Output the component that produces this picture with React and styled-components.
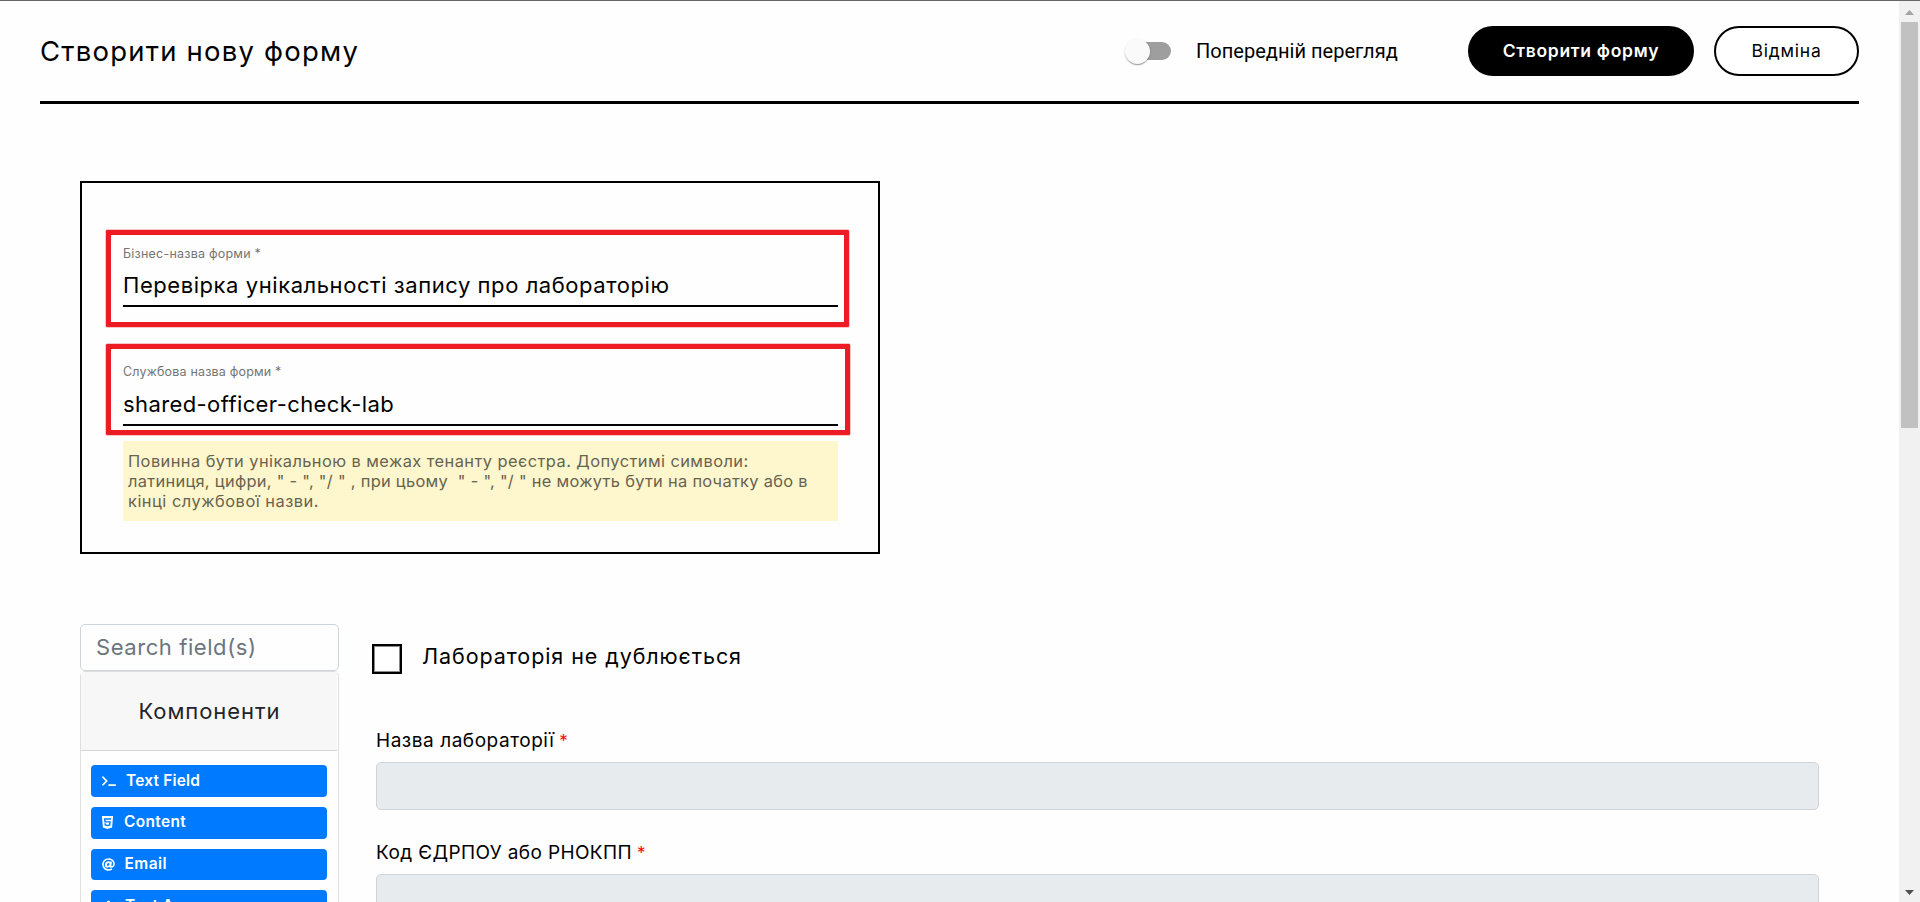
import React from "react";
import styled, { createGlobalStyle } from "styled-components";
import { FaTerminal, FaHtml5, FaAt, FaFont } from "react-icons/fa";

const Global = createGlobalStyle`
  * { box-sizing: border-box; }
  body { margin: 0; background: #fefefe; color: #000; font-family: Inter, "Noto Sans", sans-serif; }
`;
const Page = styled.div`
  display: grid;
  grid-template-columns: 1fr 21px;
  height: 902px;
  overflow: hidden;
  border-top: 1px solid #666;
`;
const Main = styled.main`
  min-width: 0;
  overflow: hidden;
`;
const Text = styled.span`
  display: block;
  font-size: ${(p) => p.$size}px;
  font-weight: ${(p) => p.$weight || 400};
  letter-spacing: ${(p) => p.$track || 0}px;
  white-space: pre;
`;
const Header = styled.header`
  display: flex;
  align-items: center;
  height: 103px;
  margin: 0 40px;
  border-bottom: 3px solid #000;
`;
const Title = styled.h1`
  margin: 0 auto 0 0;
  line-height: 36px;
`;
const Toggle = styled.div`
  display: flex;
  align-items: center;
  width: 42px;
  height: 18px;
  margin-right: 25px;
  border-radius: 9px;
  background: #9e9e9e;
`;
const Thumb = styled.span`
  width: 25px;
  height: 25px;
  margin-left: -4px;
  flex: none;
  border-radius: 50%;
  background: #fafafa;
  box-shadow: 0 2px 1px -1px rgba(0, 0, 0, 0.2), 0 1px 1px rgba(0, 0, 0, 0.14), 0 1px 3px rgba(0, 0, 0, 0.12);
`;
const ToggleLabel = styled.label`
  width: 272px;
  font-family: Roboto, sans-serif;
`;
const Button = styled.button`
  width: ${(p) => p.$w}px;
  height: 50px;
  padding: 0 0 2px;
  border: 2px solid #000;
  border-radius: 25px;
  background: ${(p) => (p.$primary ? "#000" : "#fff")};
  color: ${(p) => (p.$primary ? "#fff" : "#000")};
  font-family: inherit;
  margin-left: ${(p) => (p.$primary ? 0 : 20)}px;
`;
const Card = styled.section`
  width: 800px;
  height: 373px;
  margin: 77px 0 70px 80px;
  padding: 61px 40px 0 41px;
  border: 2px solid #000;
`;
const Field = styled.div`
  position: relative;
  margin-bottom: ${(p) => p.$gap}px;
  border-bottom: 2px solid #000;
`;
const FieldLabel = styled.div`
  height: 20px;
  line-height: 20px;
  color: #757575;
`;
const FieldValue = styled.div`
  height: 35px;
  margin-top: ${(p) => p.$top}px;
  line-height: 30px;
`;
const Highlight = styled.span`
  position: absolute;
  left: -17px;
  top: ${(p) => p.$top}px;
  width: ${(p) => p.$w}px;
  height: ${(p) => p.$h}px;
  border: 5px solid #ed1c24;
  border-radius: 1px;
  box-shadow: 0 0 0 0.5px rgba(237, 28, 36, 0.5);
`;
const Hint = styled.div`
  height: 80px;
  padding: 10px 5px;
  background: #fef6cd;
  color: #66634f;
  line-height: 20px;
`;
const Builder = styled.section`
  display: flex;
  margin-left: 80px;
`;
const Sidebar = styled.aside`
  width: 259px;
`;
const Search = styled.div`
  height: 47px;
  padding-left: 15px;
  border: 1px solid #ced4da;
  border-radius: 5px;
  color: #6c757d;
  line-height: 45px;
`;
const Panel = styled.div`
  height: 300px;
  border: 1px solid #dfdfdf;
  border-radius: 5px 5px 0 0;
`;
const PanelTitle = styled.div`
  height: 79px;
  margin-right: 1px;
  padding-left: 1px;
  border-bottom: 1px solid #d6d6d6;
  background: #f7f7f7;
  color: #212529;
  line-height: 78px;
  text-align: center;
`;
const Chips = styled.div`
  display: flex;
  flex-direction: column;
  gap: 10px;
  padding: 14px 11px 0 10px;
`;
const Chip = styled.div`
  display: flex;
  align-items: center;
  gap: ${(p) => p.$gap}px;
  height: ${(p) => p.$h || 32}px;
  flex: none;
  padding-left: ${(p) => p.$left || 11}px;
  padding-bottom: ${(p) => p.$lift || 0}px;
  border-radius: 4px;
  background: #007bff;
  color: #fff;
  line-height: 30px;
`;
const Form = styled.div`
  flex: 1;
  padding: 20px 80px 0 33px;
`;
const CheckRow = styled.div`
  display: flex;
  gap: 20px;
  height: 30px;
  line-height: 24px;
`;
const Box = styled.span`
  width: 30px;
  height: 30px;
  border: 2px solid #000;
  box-shadow: inset 0 0 0 1px #8a8a8a;
  background: #fff;
`;
const Group = styled.div`
  margin: ${(p) => p.$top}px 0 0 4px;
`;
const GroupLabel = styled.div`
  display: flex;
  gap: 5px;
  height: 36px;
  line-height: 30px;
`;
const Star = styled.span`
  color: #f00;
  font-size: 17px;
`;
const Input = styled.div`
  height: 48px;
  border: 1px solid #ced4da;
  border-radius: 5px;
  background: #e7ebee;
`;
const Scrollbar = styled.div`
  display: flex;
  flex-direction: column;
  align-items: center;
  background: #f1f1f1;
`;
const Arrow = styled.svg`
  height: 21px;
  width: 21px;
  flex: none;
`;
const ScrollThumb = styled.div`
  width: 17px;
  height: 406px;
  margin-bottom: auto;
  background: #c1c1c1;
`;

export default function App() {
  return (
    <>
      <Global />
      <Page>
        <Main>
          <Header>
            <Title><Text $size={27.5} $track={1.21}>Створити нову форму</Text></Title>
            <Toggle><Thumb /></Toggle>
            <ToggleLabel><Text $size={20} $track={0.03}>Попередній перегляд</Text></ToggleLabel>
            <Button $primary $w={226}><Text $size={17.5} $weight={600} $track={0.68}>Створити форму</Text></Button>
            <Button $w={145}><Text $size={17.5} $track={0.8}>Відміна</Text></Button>
          </Header>
          <Card>
            <Field $gap={55}>
              <FieldLabel><Text $size={12.5} $track={0.22}>Бізнес-назва форми *</Text></FieldLabel>
              <FieldValue $top={6}><Text $size={22} $track={0.56}>Перевірка унікальності запису про лабораторію</Text></FieldValue>
              <Highlight $top={-14} $w={743} $h={97} />
            </Field>
            <Field $gap={15}>
              <FieldLabel><Text $size={12.5} $track={0.18}>Службова назва форми *</Text></FieldLabel>
              <FieldValue $top={7}><Text $size={22} $track={0.4}>shared-officer-check-lab</Text></FieldValue>
              <Highlight $top={-18} $w={744} $h={91} />
            </Field>
            <Hint>
              <Text $size={16.4} $track={0.44}>Повинна бути унікальною в межах тенанту реєстра. Допустимі символи:</Text>
              <Text $size={16.4} $track={0.3}>{'латиниця, цифри, " - ", "/ " , при цьому  " - ", "/ " не можуть бути на початку або в'}</Text>
              <Text $size={16.4} $track={0.51}>кінці службової назви.</Text>
            </Hint>
          </Card>
          <Builder>
            <Sidebar>
              <Search><Text $size={22} $track={0.57}>Search field(s)</Text></Search>
              <Panel>
                <PanelTitle><Text $size={22} $track={0.94}>Компоненти</Text></PanelTitle>
                <Chips>
                  <Chip $gap={10}><FaTerminal size={14} /><Text $size={15.5} $weight={600} $track={0.17}>Text Field</Text></Chip>
                  <Chip $gap={9} $left={9} $lift={2}><FaHtml5 size={15} /><Text $size={15.5} $weight={600} $track={0.33}>Content</Text></Chip>
                  <Chip $gap={9.5} $h={31} $lift={1}><FaAt size={13} /><Text $size={15.5} $weight={600} $track={0.45}>Email</Text></Chip>
                  <Chip $gap={10}><FaFont size={13} /><Text $size={15.5} $weight={600} $track={0.17}>Text Area</Text></Chip>
                </Chips>
              </Panel>
            </Sidebar>
            <Form>
              <CheckRow><Box /><Text $size={21.5} $track={0.92}>Лабораторія не дублюється</Text></CheckRow>
              <Group $top={52}>
                <GroupLabel><Text $size={19} $track={0.54}>Назва лабораторії</Text><Star>*</Star></GroupLabel>
                <Input />
              </Group>
              <Group $top={28}>
                <GroupLabel><Text $size={19} $track={0.38}>Код ЄДРПОУ або РНОКПП</Text><Star>*</Star></GroupLabel>
                <Input />
              </Group>
            </Form>
          </Builder>
        </Main>
        <Scrollbar>
          <Arrow viewBox="0 0 21 21"><path d="M6 14h9l-4.5-5z" fill="#a3a3a3" /></Arrow>
          <ScrollThumb />
          <Arrow viewBox="0 0 21 21"><path d="M6 9h9l-4.5 5z" fill="#505050" /></Arrow>
        </Scrollbar>
      </Page>
    </>
  );
}
